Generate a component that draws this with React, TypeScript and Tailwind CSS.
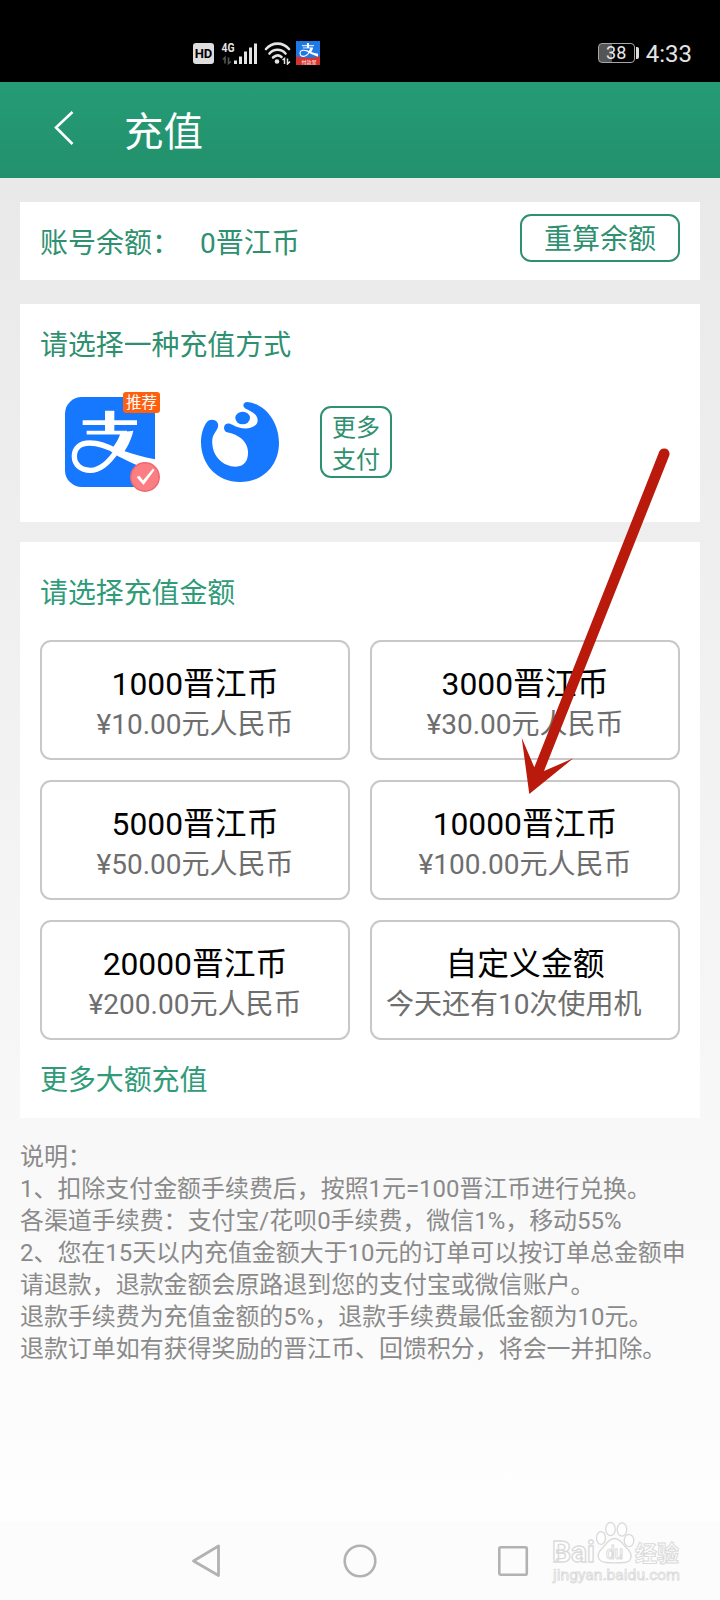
const amounts = [
  { coins: '1000晋江币', price: '¥10.00元人民币' },
  { coins: '3000晋江币', price: '¥30.00元人民币' },
  { coins: '5000晋江币', price: '¥50.00元人民币' },
  { coins: '10000晋江币', price: '¥100.00元人民币' },
  { coins: '20000晋江币', price: '¥200.00元人民币' },
  { coins: '自定义金额', price: '今天还有10次使用机', clipped: true },
];

const notes = [
  '说明：',
  '1、扣除支付金额手续费后，按照1元=100晋江币进行兑换。',
  '各渠道手续费：支付宝/花呗0手续费，微信1%，移动55%',
  '2、您在15天以内充值金额大于10元的订单可以按订单总金额申',
  '请退款，退款金额会原路退到您的支付宝或微信账户。',
  '退款手续费为充值金额的5%，退款手续费最低金额为10元。',
  '退款订单如有获得奖励的晋江币、回馈积分，将会一并扣除。',
];

function AlipayMark() {
  return (
    <g fill="none" stroke="#fff">
      <path d="M134 41V108" strokeWidth="28" />
      <path d="M53 77H216" strokeWidth="14" />
      <path d="M65 107H186" strokeWidth="11" />
      <path d="M205 101C198 132 184 156 168 178L136 162C152 142 162 125 167 106Z" fill="#fff" stroke="none" />
      <path d="M155 162C132 196 106 220 76 220C46 220 28 202 28 178C28 154 44 138 74 138C104 138 136 152 160 165" strokeWidth="16" />
      <path d="M100 133C140 150 210 176 270 187V225C240 216 184 192 148 171Z" fill="#fff" stroke="none" />
    </g>
  );
}

function StatusBar() {
  return (
    <div className="flex h-[82px] items-start justify-between bg-black pr-7 pl-[193px] pt-[41px]">
      <div className="flex items-start">
        <div className="mt-0.5 flex h-[21px] w-[21px] items-center justify-center rounded-[3px] bg-[#dedede] text-[13px] font-bold text-black">
          HD
        </div>
        <svg className="ml-[7px]" width="38" height="24" viewBox="0 0 38 24">
          <text x="0.5" y="11" fontSize="13" fontWeight="700" fill="#e4e4e4" textLength="13" lengthAdjust="spacingAndGlyphs">
            4G
          </text>
          <path d="M4 22.5V16.5L2 18.5M7.500 16.500V22.500L10 20.500" stroke="#555" strokeWidth="1.600" fill="none" />
          <path d="M14.500 19.500V23M19.500 15.500V23M24.500 10.500V23M29.500 6.500V23M34.500 2.500V23" stroke="#e4e4e4" strokeWidth="3" />
        </svg>
        <svg className="ml-[5px]" width="28" height="24" viewBox="0 0 28 24">
          <g fill="none" stroke="#e4e4e4" strokeWidth="2.600" strokeLinecap="round">
            <path d="M2 8C8.500 0.800 18.500 0.800 25 8" />
            <path d="M5.500 12.500C10 7.500 17 7.500 21.500 12.500" />
            <path d="M9 16.500C12 13.800 15 13.800 17.500 16" />
          </g>
          <circle cx="13" cy="20.500" r="2.300" fill="#e4e4e4" />
          <path d="M20.500 23V17.500L18.500 19M23.500 17.500V23L26 20.500" stroke="#e4e4e4" strokeWidth="1.500" fill="none" />
        </svg>
        <svg className="ml-1" width="24" height="24" viewBox="0 0 24 24">
          <rect width="24" height="24" fill="#1e78e6" />
          <svg x="1" y="-1" width="22" height="20" viewBox="0 0 270 270">
            <AlipayMark />
          </svg>
          <path d="M0 15.500Q12 18 24 15.500V24H0Z" fill="#d8322c" />
          <text x="5.500" y="22.500" fontSize="5" fill="#fff">
            付款里
          </text>
        </svg>
      </div>
      <div className="flex items-start">
        <div className="mt-[2px] h-[20px] w-[37px] rounded-[4px] border border-[#a6a6a6] bg-gradient-to-r from-[#555] from-38% to-black to-38% text-center text-[18px] leading-[18px] text-[#e8e8e8]">
          38
        </div>
        <div className="mt-[6px] ml-px h-[12px] w-[3px] rounded-r-[2px] bg-[#dedede]" />
        <span className="ml-[7px] text-[24px] leading-[27px] text-[#e4e4e4]">4:33</span>
      </div>
    </div>
  );
}

function AlipayOption() {
  return (
    <div className="relative h-[90px] w-[90px]">
      <svg width="90" height="90" viewBox="0 0 270 270">
        <clipPath id="tile">
          <rect width="270" height="270" rx="50" />
        </clipPath>
        <g clipPath="url(#tile)">
          <rect width="270" height="270" fill="#1678ff" />
          <AlipayMark />
        </g>
      </svg>
      <span className="absolute -top-[5px] left-[58px] h-[21px] w-[37px] rounded-[3px] bg-[#ff6010] text-center text-[15.500px] leading-[23px] text-white">
        推荐
      </span>
      <svg className="absolute top-[65px] left-[65px]" width="30" height="30" viewBox="0 0 30 30">
        <circle cx="15" cy="15" r="14.200" fill="#fa7e82" stroke="#ee696f" strokeWidth="1.500" />
        <path d="M6.500 15L9.500 13.800L13 18.500L23 6.500L24.500 8L13.500 23Z" fill="#fff" />
      </svg>
    </div>
  );
}

function HuabeiOption() {
  return (
    <svg width="78" height="80" viewBox="0 0 234 240" fill="#1678ff">
      <path d="M139 0C195 5 234 62 234 122C234 192 184 240 117 240C48 240 0 188 0 120C0 96 7 74 18 60C26 50 44 52 50 63C55 75 47 84 40 95C34 104 33 114 34 127C37 164 66 194 104 194C134 194 142 172 141 148C139 118 114 98 78 91C68 87 66 74 74 67C80 62 88 65 96 69C116 82 150 83 163 70C174 60 171 45 161 36C152 28 143 24 134 20C122 13 127 0 139 0Z" />
      <ellipse cx="125" cy="48" rx="22" ry="19" />
    </svg>
  );
}

function Watermark() {
  return (
    <svg className="absolute top-0 left-[550px]" width="134" height="72" viewBox="0 0 134 72">
      <g fill="#fefefe" stroke="#dadada" strokeWidth="1.300">
        <text x="2" y="41" fontSize="29" fontWeight="700" textLength="43" lengthAdjust="spacingAndGlyphs">
          Bai
        </text>
        <ellipse cx="51" cy="17" rx="4.500" ry="6.400" />
        <ellipse cx="60.500" cy="8" rx="4.800" ry="6.700" />
        <ellipse cx="72" cy="8.500" rx="4.800" ry="6.700" />
        <ellipse cx="79" cy="19.500" rx="4.800" ry="6.200" />
        <path d="M64.500 17.500C58 17.500 56 24 51 28.500C46 34 48 41 56 41.500C61 42 68 42 74 41.500C82 41 83 34 78 28.500C73 24 71 17.500 64.500 17.500Z" />
        <text x="56" y="38" fontSize="18" strokeWidth="1" fontWeight="500" textLength="17" lengthAdjust="spacingAndGlyphs">
          du
        </text>
        <text x="85" y="39.500" fontSize="22" fontWeight="700" strokeWidth="1">
          经验
        </text>
        <text x="3" y="58.500" fontSize="15.500" strokeWidth="0.800" textLength="127" lengthAdjust="spacingAndGlyphs">
          jingyan.baidu.com
        </text>
      </g>
    </svg>
  );
}

export default function App() {
  return (
    <div
      lang="zh-CN"
      className="relative flex h-[1600px] w-[720px] flex-col overflow-hidden font-['Roboto','Noto_Sans_CJK_SC',sans-serif]"
    >
      <StatusBar />

      {/* Title bar */}
      <header className="flex h-24 items-start bg-gradient-to-b from-[#259c75] to-[#22906c] pl-[54px] text-white">
        <svg className="mt-[29px]" width="20" height="34" viewBox="0 0 20 34">
          <path d="M18.500 1L2 16.500L18.500 33" fill="none" stroke="#fff" strokeWidth="2.600" />
        </svg>
        <h1 className="mt-[27px] ml-[50px] text-[39.500px] leading-[48px]">充值</h1>
      </header>

      <main className="flex h-[1343px] flex-col bg-gradient-to-b from-[#e9e9e9] to-[#fefefe] px-5 pt-6">
        {/* Balance */}
        <section className="flex h-[78px] items-start justify-between bg-white px-5 pt-3 text-[28px] text-[#2f9070]">
          <div className="mt-3.5 flex leading-[32px]">
            <span className="w-[160px]">账号余额：</span>
            <span>0晋江币</span>
          </div>
          <button className="h-12 w-40 rounded-[11px] border-2 border-[#2f9070] pt-px leading-[46px]">重算余额</button>
        </section>

        {/* Payment method */}
        <section className="mt-6 h-[218px] bg-white px-5 pt-[26px]">
          <h2 className="text-[27.900px] leading-[32px] text-[#2f9070]">请选择一种充值方式</h2>
          <div className="mt-[35px] flex items-start pl-[25px]">
            <AlipayOption />
            <div className="mt-[5px] ml-[46px]">
              <HuabeiOption />
            </div>
            <button className="mt-[9px] ml-[41px] h-[72px] w-[72px] rounded-[11px] border-2 border-[#2f9070] pt-[3px] text-[24px] leading-[32px] text-[#2f9070]">
              更多
              <br />
              支付
            </button>
          </div>
        </section>

        {/* Amount */}
        <section className="mt-5 h-[576px] bg-white px-5 pt-9">
          <h2 className="text-[27.900px] leading-[32px] text-[#2f9b78]">请选择充值金额</h2>
          <div className="mt-[30px] grid grid-cols-2 gap-5">
            {amounts.map((item) => (
              <button
                key={item.coins}
                className="flex h-[120px] flex-col rounded-[11px] border-2 border-[#c8c8c8] px-3.5 pt-[21px] whitespace-nowrap"
              >
                <span className="w-full text-center text-[31.800px] leading-[42px] text-black">{item.coins}</span>
                <span
                  className={
                    item.clipped
                      ? 'w-full text-left text-[28px] leading-[39px] text-[#6e6e6e]'
                      : 'w-full text-center text-[28px] leading-[39px] text-[#6e6e6e]'
                  }
                >
                  {item.price}
                </span>
              </button>
            ))}
          </div>
          <a className="mt-[25px] block text-[27.900px] leading-[32px] text-[#2f9b78]">更多大额充值</a>
        </section>

        {/* Notes */}
        <div className="mt-[23px] text-[23.950px] leading-[32px] whitespace-nowrap text-[#8a8a8a]">
          {notes.map((line) => (
            <p key={line}>{line}</p>
          ))}
        </div>
      </main>

      {/* System navigation */}
      <nav className="relative h-[79px] bg-[#fcfcfc] pt-[21px] pl-[190px]">
        <div className="flex items-center">
          <svg width="32" height="38" viewBox="0 0 32 38">
            <path d="M28.500 4V33.500L3.500 19Z" fill="none" stroke="#b2b2b2" strokeWidth="2.800" strokeLinejoin="round" />
          </svg>
          <svg className="ml-[119px]" width="38" height="38" viewBox="0 0 38 38">
            <circle cx="19" cy="19" r="15.300" fill="none" stroke="#b2b2b2" strokeWidth="2.600" />
          </svg>
          <svg className="ml-[117px]" width="34" height="38" viewBox="0 0 34 38">
            <rect x="3.300" y="5.200" width="27.500" height="27.500" rx="1.500" fill="none" stroke="#b2b2b2" strokeWidth="2.600" />
          </svg>
        </div>
        <Watermark />
      </nav>

      {/* Pointer to the 10000 option */}
      <svg className="pointer-events-none absolute top-[440px] left-[510px]" width="170" height="360" viewBox="510 440 170 360">
        <path
          d="M659.300 451.500L534.300 767.300L521.700 737.700L529.300 794L573.300 758.300L544 771L669.300 455.500A5.400 5.400 0 0 0 659.300 451.500Z"
          fill="#ba1a0c"
        />
      </svg>
    </div>
  );
}
